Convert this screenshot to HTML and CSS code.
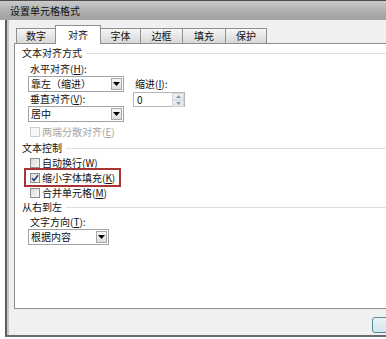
FILE: index.html
```html
<!DOCTYPE html>
<html lang="zh-CN">
<head>
  <meta charset="UTF-8" />
  <title>设置单元格格式</title>
  <link rel="stylesheet" href="styles.css">
</head>
<body>
  <div class="window">
    <div class="titlebar">设置单元格格式</div>
    <div class="client">
      <div class="tabs">
        <div class="tab t1">数字</div>
        <div class="tab t2 active">对齐</div>
        <div class="tab t3">字体</div>
        <div class="tab t4">边框</div>
        <div class="tab t5">填充</div>
        <div class="tab t6">保护</div>
      </div>

      <div class="panel">
        <div class="group-title"><span>文本对齐方式</span><i class="line"></i></div>
        <div class="align-grid">
          <div class="col-left">
            <div class="label">水平对齐(<u>H</u>):</div>
            <div class="combo">
              <span>靠左（缩进）</span>
              <i class="drop"><svg width="7" height="4" viewBox="0 0 7 4"><path d="M0 0H7L3.5 4Z" fill="#000"/></svg></i>
            </div>
            <div class="label">垂直对齐(<u>V</u>):</div>
            <div class="combo">
              <span>居中</span>
              <i class="drop"><svg width="7" height="4" viewBox="0 0 7 4"><path d="M0 0H7L3.5 4Z" fill="#000"/></svg></i>
            </div>
          </div>
          <div class="col-right">
            <div class="label">缩进(<u>I</u>):</div>
            <div class="spin">
              <span>0</span>
              <div class="spin-btns">
                <i><svg width="5" height="3" viewBox="0 0 5 3"><path d="M0 3H5L2.5 0Z" fill="#8a96a8"/></svg></i>
                <i><svg width="5" height="3" viewBox="0 0 5 3"><path d="M0 0H5L2.5 3Z" fill="#8a96a8"/></svg></i>
              </div>
            </div>
          </div>
        </div>
        <div class="check disabled first"><i class="box"></i><span>两端分散对齐(<u>E</u>)</span></div>

        <div class="group-title gap"><span>文本控制</span><i class="line"></i></div>
        <div class="checks">
          <div class="check"><i class="box"></i><span>自动换行(<u>W</u>)</span></div>
          <div class="check marked">
            <i class="box"><svg width="8" height="8" viewBox="0 0 8 8"><path d="M1 4.2L3 6.4L7 1.2" fill="none" stroke="#2b3f75" stroke-width="1.6"/></svg></i>
            <span>缩小字体填充(<u>K</u>)</span>
          </div>
          <div class="check"><i class="box"></i><span>合并单元格(<u>M</u>)</span></div>
        </div>

        <div class="group-title near"><span>从右到左</span><i class="line"></i></div>
        <div class="label indent dir-label">文字方向(<u>T</u>):</div>
        <div class="combo short">
          <span>根据内容</span>
          <i class="drop"><svg width="7" height="4" viewBox="0 0 7 4"><path d="M0 0H7L3.5 4Z" fill="#000"/></svg></i>
        </div>
      </div>

      <div class="footer">
        <button class="btn default" aria-label="确定"></button>
        <button class="btn" aria-label="取消"></button>
      </div>
    </div>
  </div>
</body>
</html>
```

FILE: styles.css
```css
body {
  margin: 0;
  background: #fff;
  font-family: "Noto Sans CJK SC", "Noto Sans", sans-serif;
  font-size: 10px;
  color: #111;
}
u {
  text-decoration: underline;
}
.window {
  width: 386px;
  height: 339px;
  overflow: hidden;
}
.titlebar {
  height: 20px;
  box-sizing: border-box;
  border-top: 1px solid #4c4c4c;
  background: linear-gradient(#c9c9c9, #acacac 60%, #a0a0a0);
  padding-left: 10px;
  line-height: 19px;
}
.client {
  width: 531px;
  height: 317px;
  box-sizing: border-box;
  margin-left: 5px;
  border-left: 2px solid #5e5e5e;
  border-bottom: 2px solid #6a6a6a;
  box-shadow: inset 2px 0 0 #c8c8c8;
  background: #f0f0f0;
  padding-left: 7px;
}

/* tabs */
.tabs {
  height: 23px;
  display: flex;
  align-items: flex-end;
  padding-left: 2px;
}
.tab {
  height: 15px;
  box-sizing: border-box;
  border: 1px solid #8e8f8f;
  border-bottom: none;
  margin-right: -1px;
  background: linear-gradient(#f6f6f6, #e6e6e6 50%, #d8d8d8);
  text-align: center;
  line-height: 14px;
}
.t1 { width: 40px; }
.t2 { width: 46px; }
.t3 { width: 41px; }
.t4 { width: 43px; }
.t5 { width: 44px; }
.t6 { width: 42px; }
.tab.active {
  height: 19px;
  margin-bottom: -1px;
  background: #fff;
  line-height: 17px;
  z-index: 1;
}

/* panel */
.panel {
  height: 266px;
  box-sizing: border-box;
  border: 1px solid #8e8f8f;
  background: #fff;
  padding-top: 3px;
}
.group-title {
  display: flex;
  align-items: center;
  height: 12px;
  line-height: 12px;
  margin-left: 7px;
}
.group-title .line {
  flex: 1;
  height: 1px;
  margin-left: 4px;
  background: #dedede;
}
.group-title.gap {
  margin-top: 3px;
}
.group-title.near {
  margin-top: 1px;
}
.label {
  height: 12px;
  line-height: 12px;
  padding-left: 2px;
}
.align-grid {
  display: flex;
  gap: 9px;
  margin-top: 4px;
  margin-left: 13px;
}
.col-left {
  width: 96px;
}
.col-left .combo {
  margin-top: 1px;
}
.col-left .label + .combo + .label {
  margin-top: 1px;
}
.col-right {
  padding-top: 15px;
}

.combo {
  height: 16px;
  box-sizing: border-box;
  border: 1px solid #a3a3a3;
  background: #fff;
  display: flex;
  align-items: center;
  justify-content: space-between;
  padding-left: 2px;
  line-height: 14px;
}
.combo.short {
  width: 81px;
  margin-left: 13px;
  margin-top: 1px;
}
.drop {
  width: 11px;
  height: 12px;
  margin-right: 1px;
  box-sizing: border-box;
  border: 1px solid #a8a8a8;
  background: linear-gradient(#f7f7f7, #dedede);
  display: flex;
  align-items: center;
  justify-content: center;
}
.drop svg {
  display: block;
}

.spin {
  width: 52px;
  height: 15px;
  margin-top: 2px;
  box-sizing: border-box;
  border: 1px solid #b4b6bc;
  display: flex;
  justify-content: space-between;
  padding-left: 3px;
  line-height: 13px;
}
.spin-btns {
  width: 12px;
  display: flex;
  flex-direction: column;
}
.spin-btns i {
  flex: 1;
  display: flex;
  align-items: center;
  justify-content: center;
  background: linear-gradient(#f2f4f7, #dfe3ea);
  border: 1px solid #d2d6dd;
  margin-bottom: -1px;
}
.spin-btns svg {
  display: block;
}

/* checkboxes */
.check {
  display: flex;
  align-items: center;
  gap: 2px;
  width: fit-content;
  height: 15px;
  margin-left: 11px;
  padding: 0 4px;
}
.check.first {
  margin-top: 2px;
}
.box {
  width: 10px;
  height: 10px;
  box-sizing: border-box;
  border: 1px solid #8f8f8f;
  background: linear-gradient(135deg, #dcdcdc, #f8f8f8);
  display: flex;
  align-items: center;
  justify-content: center;
}
.check.disabled {
  color: #a6a6a6;
}
.check.disabled .box {
  border-color: #cfcfcf;
  background: #f6f6f6;
}
.checks {
  margin-top: 1px;
}
.check.marked {
  outline: 2px solid #a83434;
}
.dir-label {
  margin-top: 3px;
  margin-left: 13px;
}

/* footer buttons */
.footer {
  height: 26px;
  display: flex;
  justify-content: flex-end;
  align-items: flex-start;
  gap: 6px;
  padding: 8px 8px 0 0;
  box-sizing: border-box;
}
.btn {
  width: 75px;
  height: 16px;
  font: inherit;
  border: 1px solid #707070;
  border-radius: 3px;
  background: linear-gradient(#f2f2f2, #dcdcdc);
}
.btn.default {
  border-color: #5a8a96;
  background: linear-gradient(#eaf4f8, #d3e6ee);
}
```
